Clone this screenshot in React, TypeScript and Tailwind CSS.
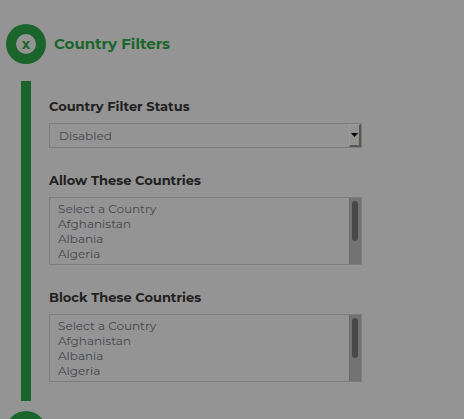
import { useState } from "react";

const countries = ["Select a Country", "Afghanistan", "Albania", "Algeria"];

const StepCircle = ({ mark }: { mark?: string }) => (
  <span className="flex size-10 shrink-0 items-center justify-center rounded-full bg-[#1a652b]">
    <span className="flex size-5 items-center justify-center rounded-full bg-[#949494] text-sm leading-5 font-bold text-[#1a652b]">
      {mark}
    </span>
  </span>
);

const CountryList = ({ id, label }: { id: string; label: string }) => (
  <div className="flex flex-col gap-[7px]">
    <label htmlFor={id} className="text-[13px] leading-5 font-bold text-[#212121]">
      {label}
    </label>
    <div className="flex h-[68px] border border-[#7b7d82]">
      <select
        id={id}
        multiple
        size={4}
        className="min-w-0 flex-1 appearance-none overflow-hidden px-1.5 py-[3px] text-xs leading-[15px] text-[#44484d] outline-none"
      >
        {countries.map((country) => (
          <option key={country} value={country} className="h-[15px] min-h-0 px-0.5 py-0 leading-[15px]">
            {country}
          </option>
        ))}
      </select>
      <div className="flex w-3 border-l border-[#676a69] bg-[#717473] pt-[3px] pl-0.5">
        <span className="h-10 w-1.5 rounded-full bg-[#48494a]" />
      </div>
    </div>
  </div>
);

const App = () => {
  const [status, setStatus] = useState("Disabled");

  return (
    <main className="h-screen overflow-hidden bg-[#949494] px-1.5 pt-6 font-['Montserrat','Inter',sans-serif]">
      <header className="flex items-center gap-2">
        <StepCircle mark="x" />
        <h1 className="text-[15px] leading-5 font-bold text-[#1a652b]">Country Filters</h1>
      </header>

      <section className="mt-[17px] mb-2.5 ml-[15px] border-l-10 border-[#1a652b] pt-[15px] pb-[19px] pl-[18px]">
        <form className="flex max-w-[313px] flex-col gap-[22px]">
          <div className="flex flex-col gap-[7px]">
            <label htmlFor="status" className="text-[13px] leading-5 font-bold text-[#212121]">
              Country Filter Status
            </label>
            <div className="relative">
              <select
                id="status"
                value={status}
                onChange={(e) => setStatus(e.target.value)}
                className="block h-[25px] w-full appearance-none border border-[#7b7d82] pr-4 pl-[9px] text-xs text-[#44484d] outline-none"
              >
                <option>Disabled</option>
                <option>Enabled</option>
              </select>
              <span className="pointer-events-none absolute inset-y-px right-px flex w-3 items-center justify-center border-t border-r-2 border-b-2 border-l border-t-[#9c9c98] border-r-[#565656] border-b-[#565656] border-l-[#9c9c98] bg-[#92928e]">
                <svg viewBox="0 0 7 4" className="h-1 w-[7px] shrink-0" aria-hidden="true">
                  <path d="M0 0h7L3.5 4z" fill="#000" />
                </svg>
              </span>
            </div>
          </div>
          <CountryList id="allow" label="Allow These Countries" />
          <CountryList id="block" label="Block These Countries" />
        </form>
      </section>

      <StepCircle />
    </main>
  );
};

export default App;
